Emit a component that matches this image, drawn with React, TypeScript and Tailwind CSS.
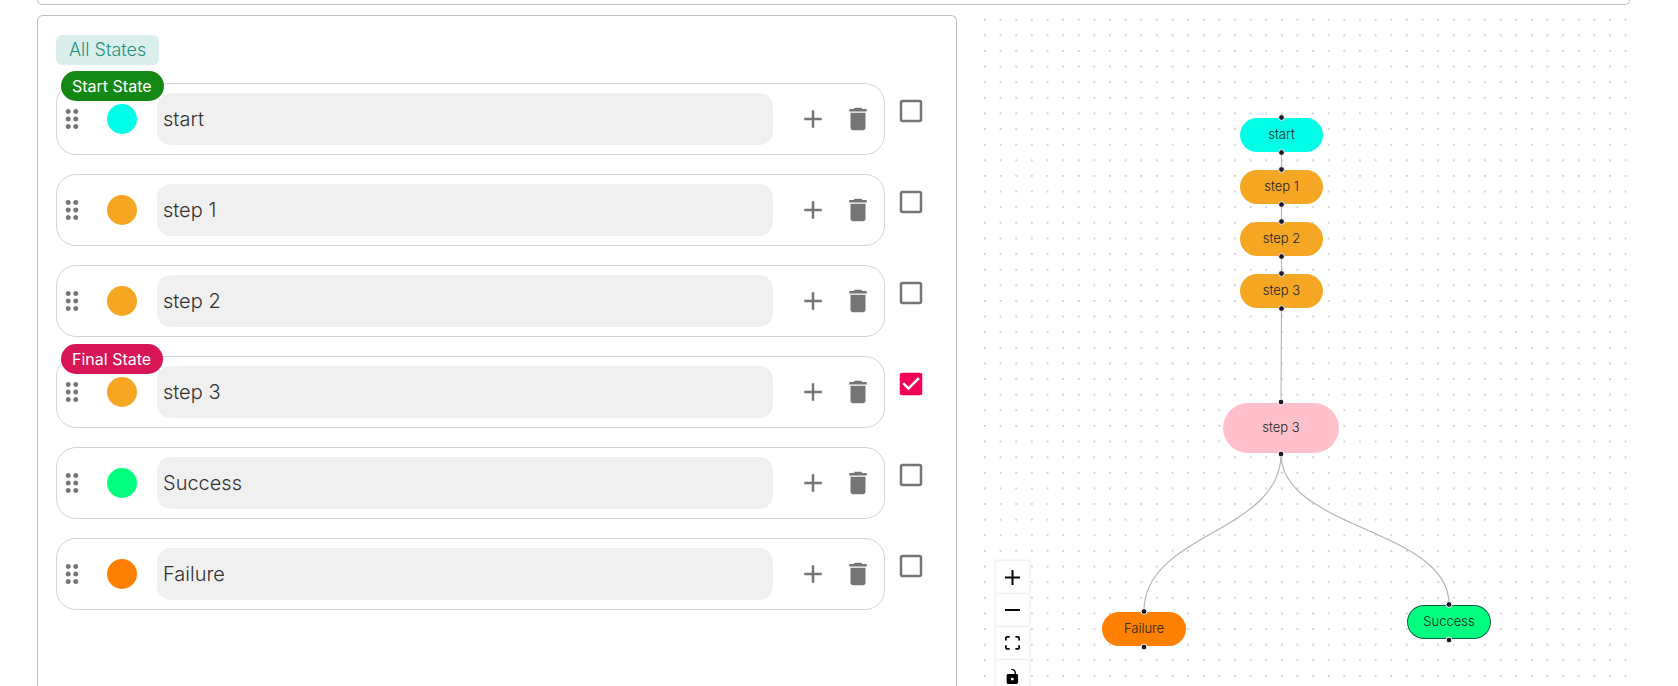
import { useState } from "react";
import {
  MdAdd,
  MdCheckBox,
  MdCheckBoxOutlineBlank,
  MdDelete,
  MdDragIndicator,
} from "react-icons/md";

type State = { id: string; label: string; dot: string; tag?: "start" | "final" };

const STATES: State[] = [
  { id: "s0", label: "start", dot: "bg-[#00ffe6]", tag: "start" },
  { id: "s1", label: "step 1", dot: "bg-[#f5a623]" },
  { id: "s2", label: "step 2", dot: "bg-[#f5a623]" },
  { id: "s3", label: "step 3", dot: "bg-[#f5a623]", tag: "final" },
  { id: "s4", label: "Success", dot: "bg-[#00ff80]" },
  { id: "s5", label: "Failure", dot: "bg-[#ff8000]" },
];

const TAGS = {
  start: { text: "Start State", color: "bg-[#148814]" },
  final: { text: "Final State", color: "bg-[#d81557]" },
};

function StateRow({ state }: { state: State }) {
  const [checked, setChecked] = useState(state.tag === "final");
  const tag = state.tag ? TAGS[state.tag] : null;
  const Box = checked ? MdCheckBox : MdCheckBoxOutlineBlank;
  return (
    <li className="flex items-start gap-[11px]">
      <div className="relative flex h-[72px] min-w-0 flex-1 items-center rounded-[20px] border border-[#d3d3d3] pr-[11px]">
        {tag && (
          <span
            className={`absolute -top-[13px] left-1 flex h-[30px] items-center rounded-full pb-px pl-[11px] pr-3 text-base text-white ${tag.color}`}
          >
            {tag.text}
          </span>
        )}
        <MdDragIndicator className="size-[30px] shrink-0 text-[#757575]" />
        <button
          aria-label={`Colour of ${state.label}`}
          className={`ml-5 size-[30px] shrink-0 rounded-full ${state.dot}`}
        />
        <input
          aria-label="State name"
          defaultValue={state.label}
          className="ml-5 h-[52px] min-w-0 flex-1 rounded-[14px] bg-[#f0f0f0] px-1.5 text-xl font-light text-[#333] outline-none"
        />
        <button aria-label="Add state" className="ml-[25px] shrink-0 text-[#757575]">
          <MdAdd className="size-[30px]" />
        </button>
        <button aria-label="Delete state" className="ml-[15px] shrink-0 text-[#757575]">
          <MdDelete className="size-[30px]" />
        </button>
      </div>
      <label className="mt-[13px] grid size-[30px] shrink-0 cursor-pointer">
        <input
          type="checkbox"
          aria-label={`${state.label} is final`}
          checked={checked}
          onChange={(e) => setChecked(e.target.checked)}
          className="col-start-1 row-start-1 appearance-none"
        />
        <Box
          className={`col-start-1 row-start-1 size-[30px] ${checked ? "text-[#f50057]" : "text-[#757575]"}`}
        />
      </label>
    </li>
  );
}

type FlowNode = { label: string; place: string; look: string };

const NODES: FlowNode[] = [
  { label: "start", place: "left-[262px] top-[103px] w-[83px] h-[34px]", look: "bg-[#00ffe6]" },
  { label: "step 1", place: "left-[262px] top-[155px] w-[83px] h-[34px]", look: "bg-[#f5a623]" },
  { label: "step 2", place: "left-[262px] top-[207px] w-[83px] h-[34px]", look: "bg-[#f5a623]" },
  { label: "step 3", place: "left-[262px] top-[259px] w-[83px] h-[34px]", look: "bg-[#f5a623]" },
  { label: "step 3", place: "left-[245px] top-[388px] w-[116px] h-[50px]", look: "bg-[#ffc0cb]" },
  { label: "Failure", place: "left-[124px] top-[597px] w-[84px] h-[34px]", look: "bg-[#ff8000]" },
  {
    label: "Success",
    place: "left-[429px] top-[590px] w-[84px] h-[34px]",
    look: "bg-[#00ff80] border border-[#1a192b]/70",
  },
];

const EDGES = [
  "M303.5 138V154",
  "M303.5 190V206",
  "M303.5 242V258",
  "M303.5 294C303.5 340 303 340 303 387",
  "M303 439C303 518 166 518 166 596",
  "M303 439C303 514 471 514 471 589",
];

const HANDLES: [number, number][] = [
  [303.5, 102.5], [303.5, 137.5],
  [303.5, 154.5], [303.5, 189.5],
  [303.5, 206.5], [303.5, 241.5],
  [303.5, 258.5], [303.5, 293.5],
  [303, 387], [303, 439],
  [166, 596.5], [166, 632],
  [471, 589.5], [471, 625],
];

const CONTROLS = [
  {
    name: "Zoom in",
    box: "0 0 32 32",
    d: "M32 18.133H18.133V32h-4.266V18.133H0v-4.266h13.867V0h4.266v13.867H32z",
  },
  { name: "Zoom out", box: "0 0 32 5", d: "M0 0h32v4.2H0z" },
  {
    name: "Fit view",
    box: "0 0 32 30",
    d: "M3.692 4.63c0-.53.4-.938.939-.938h5.215V0H4.708C2.13 0 0 2.054 0 4.63v5.216h3.692V4.631zM27.354 0h-5.2v3.692h5.17c.53 0 .984.4.984.939v5.215H32V4.631A4.624 4.624 0 0027.354 0zm.954 24.83c0 .532-.4.94-.939.94h-5.215v3.768h5.215c2.577 0 4.631-2.13 4.631-4.707v-5.139h-3.692v5.139zm-23.677.94c-.531 0-.939-.4-.939-.94v-5.138H0v5.139c0 2.577 2.13 4.707 4.708 4.707h5.138V25.77H4.631z",
  },
  {
    name: "Toggle interactivity",
    box: "0 0 25 32",
    d: "M21.333 10.667H19.81V7.619C19.81 3.429 16.38 0 12.19 0c-4.114 1.828-1.37 2.133.305 2.438 1.676.305 4.42 2.59 4.42 5.181v3.048H3.047A3.056 3.056 0 000 13.714v15.238A3.056 3.056 0 003.048 32h18.285a3.056 3.056 0 003.048-3.048V13.714a3.056 3.056 0 00-3.048-3.047zM12.19 24.533a3.056 3.056 0 01-3.047-3.047 3.056 3.056 0 013.047-3.048 3.056 3.056 0 013.048 3.048 3.056 3.056 0 01-3.048 3.047z",
  },
];

function FlowCanvas() {
  return (
    <section aria-label="State diagram" className="relative min-w-0 overflow-hidden">
      <svg className="absolute inset-0 size-full" aria-hidden="true">
        <defs>
          <pattern id="dots" x="-0.8" y="-3.1" width="15.625" height="15.625" patternUnits="userSpaceOnUse">
            <circle cx="7.8" cy="7.8" r="0.6" fill="#6f6f78" />
          </pattern>
        </defs>
        <rect width="100%" height="100%" fill="url(#dots)" />
        <g fill="none" stroke="#b1b1b7" strokeWidth="1.1">
          {EDGES.map((d) => (
            <path key={d} d={d} />
          ))}
        </g>
      </svg>
      {NODES.map((n) => (
        <div
          key={n.place}
          className={`absolute flex items-center justify-center rounded-full text-[13px] font-light text-[#222] ${n.place} ${n.look}`}
        >
          {n.label}
        </div>
      ))}
      <svg className="absolute inset-0 size-full" aria-hidden="true">
        {HANDLES.map(([x, y]) => (
          <circle key={`${x}-${y}`} cx={x} cy={y} r="2.9" fill="#1a192b" stroke="#fff" strokeWidth="1" />
        ))}
      </svg>
      <div className="absolute left-[18px] top-[546px] flex w-[33px] flex-col shadow-[0_0_2px_1px_rgba(0,0,0,0.08)]">
        {CONTROLS.map((c) => (
          <button
            key={c.name}
            aria-label={c.name}
            className="flex h-[33px] items-center justify-center border-b border-[#eee] bg-[#fefefe]"
          >
            <svg viewBox={c.box} className="max-h-[15px] w-[15px]">
              <path d={c.d} />
            </svg>
          </button>
        ))}
      </div>
    </section>
  );
}

export default function App() {
  return (
    <div className="flex h-screen flex-col gap-2.5 overflow-hidden bg-white pl-[37px] pr-12 font-['Inter',sans-serif]">
      <div className="h-[5px] shrink-0 rounded-b-md border border-t-0 border-[#c0c0c0]" />
      <main className="grid min-h-0 flex-1 grid-cols-[920fr_652fr] gap-[21px]">
        <section className="min-w-0 rounded-t-md border border-b-0 border-[#c0c0c0] pl-[18px] pr-[30px] pt-[19px]">
          <h2 className="flex h-[30px] w-fit items-center rounded-md bg-[#daeeec] px-[13px] text-lg font-light text-[#23917f]">
            All States
          </h2>
          <ul className="mt-[18px] flex flex-col gap-[19px]">
            {STATES.map((s) => (
              <StateRow key={s.id} state={s} />
            ))}
          </ul>
        </section>
        <FlowCanvas />
      </main>
    </div>
  );
}
